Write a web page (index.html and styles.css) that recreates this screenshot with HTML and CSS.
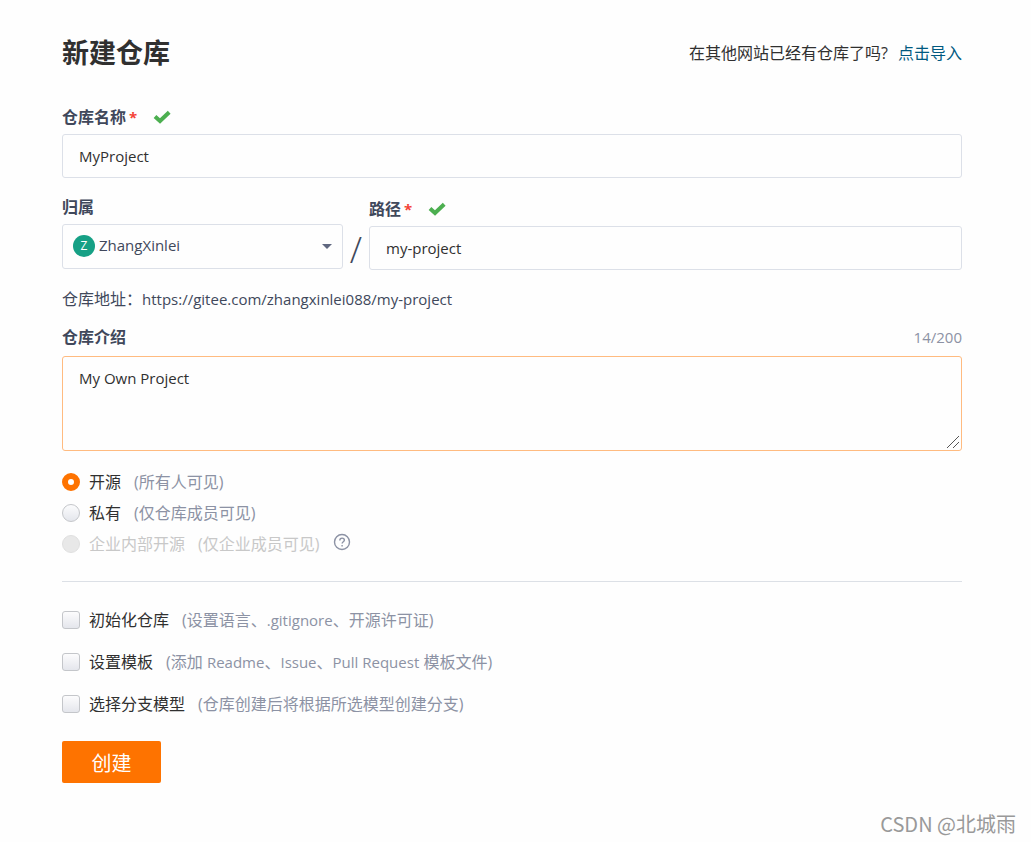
FILE: index.html
```html
<!DOCTYPE html>
<html lang="zh-CN">
<head>
    <meta charset="UTF-8">
    <meta name="viewport" content="width=device-width, initial-scale=1.0">
    <title>新建仓库</title>
    <link rel="stylesheet" href="styles.css">
</head>
<body>
    <div class="container">
        <div class="header">
            <h1>新建仓库</h1>
            <p>在其他网站已经有仓库了吗? <a href="#">点击导入</a></p>
        </div>
        <form>
            <div class="field">
                <div class="label-row">
                    <label for="name">仓库名称<span class="required">*</span></label>
                    <svg class="check" viewBox="0 0 18 14"><path d="M2 6.5 7 11 16.2 2.2"/></svg>
                </div>
                <input type="text" id="name" value="MyProject">
            </div>

            <div class="path-row">
                <div class="owner">
                    <div class="label-row"><label for="owner">归属</label></div>
                    <div class="select-box">
                        <span class="avatar">Z</span>
                        <select id="owner">
                            <option>ZhangXinlei</option>
                        </select>
                        <span class="caret"></span>
                    </div>
                </div>
                <div class="slash">/</div>
                <div class="path">
                    <div class="label-row">
                        <label for="path">路径<span class="required">*</span></label>
                        <svg class="check" viewBox="0 0 18 14"><path d="M2 6.5 7 11 16.2 2.2"/></svg>
                    </div>
                    <input type="text" id="path" value="my-project">
                </div>
            </div>

            <p class="address">仓库地址：<span class="latin">https://gitee.com/zhangxinlei088/my-project</span></p>

            <div class="field">
                <div class="label-row intro">
                    <label for="intro">仓库介绍</label>
                    <span class="count">14/200</span>
                </div>
                <div class="textarea-box">
                    <textarea id="intro">My Own Project</textarea>
                    <svg class="grip" viewBox="0 0 14 14"><path d="M1 13 13 1M7 13 13 7"/></svg>
                </div>
            </div>

            <div class="radios">
                <div class="option">
                    <input type="radio" name="public" id="open" checked>
                    <label for="open">开源<span class="hint">(所有人可见)</span></label>
                </div>
                <div class="option">
                    <input type="radio" name="public" id="private">
                    <label for="private">私有<span class="hint">(仅仓库成员可见)</span></label>
                </div>
                <div class="option disabled">
                    <input type="radio" name="public" id="inner" disabled>
                    <label for="inner">企业内部开源<span class="hint">(仅企业成员可见)</span></label>
                    <svg class="help" viewBox="0 0 18 18">
                        <circle cx="9" cy="9" r="7.5"/>
                        <path d="M6.8 7.4C6.8 4.4 11.4 4.5 11.4 7.1C11.4 8.8 9.1 8.8 9.1 10.6"/>
                        <path d="M9.1 12V13.5"/>
                    </svg>
                </div>
            </div>

            <div class="checks">
                <div class="option">
                    <input type="checkbox" id="init">
                    <label for="init">初始化仓库<span class="hint">(设置语言、<span class="latin">.gitignore</span>、开源许可证)</span></label>
                </div>
                <div class="option">
                    <input type="checkbox" id="template">
                    <label for="template">设置模板<span class="hint">(添加 <span class="latin">Readme</span>、<span class="latin">Issue</span>、<span class="latin">Pull Request</span> 模板文件)</span></label>
                </div>
                <div class="option">
                    <input type="checkbox" id="branch">
                    <label for="branch">选择分支模型<span class="hint">(仓库创建后将根据所选模型创建分支)</span></label>
                </div>
            </div>

            <button type="submit">创建</button>
        </form>
    </div>
    <div class="watermark">CSDN @北城雨</div>
</body>
</html>
```
FILE: styles.css
```css
* {
    box-sizing: border-box;
}

body {
    margin: 0;
    min-height: 100vh;
    position: relative;
    background: #fefefe;
    color: #303030;
    font-family: "Open Sans", "Noto Sans CJK SC", sans-serif;
    font-size: 16px;
    line-height: 24px;
}

.container {
    padding: 32px 69px 48px 62px;
}

.header {
    display: flex;
    justify-content: space-between;
    align-items: center;
    height: 42px;
    margin-bottom: 29px;
}

h1 {
    margin: 0;
    font-size: 27px;
    line-height: 40px;
}

p {
    margin: 0;
}

a {
    margin-left: 6px;
    color: #005980;
    text-decoration: none;
}

.latin {
    font-size: 15px;
}

.field {
    display: flex;
    flex-direction: column;
}

.label-row {
    display: flex;
    align-items: center;
    height: 28px;
    margin-bottom: 3px;
    color: #40485b;
    font-weight: bold;
}

.required {
    margin-left: 3px;
    color: #f44336;
    font-size: 15px;
}

.check {
    width: 18px;
    height: 14px;
    margin-left: 16px;
    fill: none;
    stroke: #4caf50;
    stroke-width: 4;
}

input[type="text"],
select,
textarea {
    display: block;
    width: 100%;
    height: 44px;
    padding: 0 16px;
    border: 1px solid #dce0e8;
    border-radius: 3px;
    outline: none;
    background: #fefefe;
    color: #303030;
    font-family: inherit;
    font-size: 15px;
}

.path-row {
    display: flex;
    margin-top: 15px;
}

.owner {
    width: 281px;
}

.path {
    flex: 1;
    padding-top: 2px;
}

.slash {
    width: 26px;
    padding-top: 39px;
    color: #40485b;
    font-size: 36px;
    font-weight: 300;
    line-height: 36px;
    text-align: center;
}

.select-box {
    position: relative;
}

select {
    appearance: none;
    height: 45px;
    padding: 0 32px 4px 36px;
    color: #40485b;
}

.avatar {
    position: absolute;
    left: 11px;
    top: 11px;
    width: 22px;
    height: 22px;
    border-radius: 50%;
    background: #16a085;
    color: #fff;
    font-size: 12px;
    line-height: 22px;
    text-align: center;
}

.caret {
    position: absolute;
    right: 11px;
    top: 20px;
    border: 5px solid transparent;
    border-top-color: #606880;
    border-bottom: 0;
}

.address {
    margin: 17px 0 12px;
    color: #40485b;
}

.intro {
    justify-content: space-between;
    margin-bottom: 5px;
}

.count {
    color: #8c92a4;
    font-size: 15px;
    font-weight: normal;
}

.textarea-box {
    position: relative;
}

textarea {
    height: 95px;
    padding: 9px 16px;
    border-color: #ffbb80;
    line-height: 24px;
    resize: vertical;
}

textarea::-webkit-resizer {
    background: transparent;
}

.grip {
    position: absolute;
    right: 2px;
    bottom: 2px;
    width: 14px;
    height: 14px;
    fill: none;
    stroke: #555;
    pointer-events: none;
}

.radios {
    padding: 15px 0 22px;
    border-bottom: 1px solid #dce0e6;
}

.option {
    display: flex;
    align-items: center;
    height: 31px;
}

.option input {
    appearance: none;
    width: 18px;
    height: 18px;
    margin: 0 9px 0 0;
    border: 1px solid #c4c6ca;
    background: linear-gradient(#fcfcfd, #e4e6ec);
}

.option input[type="radio"] {
    border-radius: 50%;
}

.option input[type="checkbox"] {
    border-radius: 3px;
}

.option input[type="radio"]:checked {
    border: 6px solid #fe7300;
    background: #fff;
}

.hint {
    margin-left: 13px;
    color: #8c92a4;
}

.disabled,
.disabled .hint {
    color: #c8c8c8;
}

.option input:disabled {
    border-color: #e0e0e0;
    background: #e8e8e8;
}

.help {
    width: 18px;
    height: 18px;
    margin: 0 0 4px 14px;
    fill: none;
    stroke: #8c92a4;
    stroke-width: 1.4;
}

.checks {
    padding: 17px 0 16px;
}

.checks .option {
    height: 42px;
}

button {
    display: block;
    width: 99px;
    height: 42px;
    padding: 0;
    border: none;
    border-radius: 2px;
    background: #fe7300;
    color: #fff;
    font-family: inherit;
    font-size: 20px;
    cursor: pointer;
}

.watermark {
    position: absolute;
    right: 15px;
    bottom: 6px;
    color: #999;
    font-family: "Noto Sans CJK SC", sans-serif;
    font-size: 20px;
}
```
